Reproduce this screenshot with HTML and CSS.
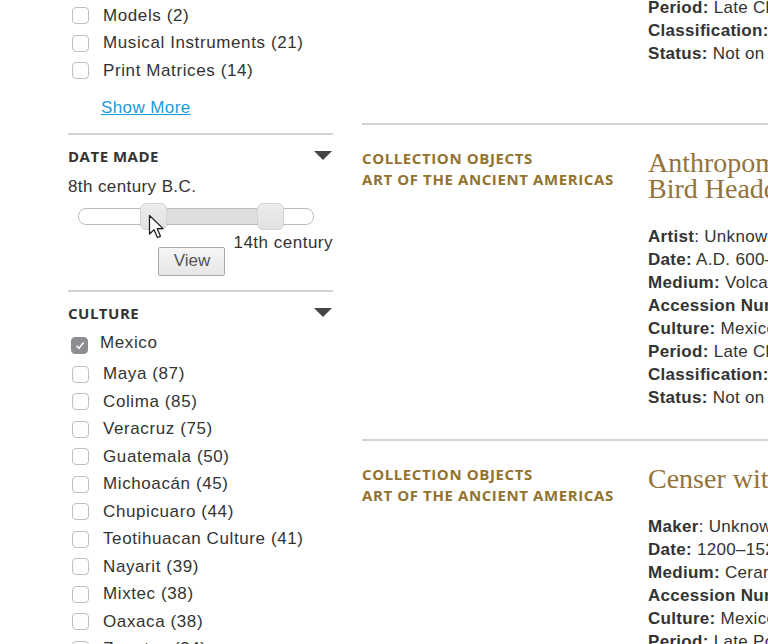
FILE: index.html
```html
<!DOCTYPE html>
<html lang="en">
<head>
    <meta charset="UTF-8">
    <meta name="viewport" content="width=device-width, initial-scale=1.0">
    <title>Collection Search</title>
    <link rel="stylesheet" href="styles.css">
</head>
<body>
<div class="page">

    <aside class="sidebar">
        <ul class="facet-list">
            <li><span class="box"></span>Models (2)</li>
            <li><span class="box"></span>Musical Instruments (21)</li>
            <li><span class="box"></span>Print Matrices (14)</li>
        </ul>
        <a class="show-more" href="#">Show More</a>

        <section class="facet">
            <h3 class="facet-title">Date Made <span class="caret"></span></h3>
            <div class="range-min">8th century B.C.</div>
            <div class="slider">
                <div class="slider-fill"></div>
                <span class="handle handle-lo"></span>
                <span class="handle handle-hi"></span>
                <svg class="cursor" width="18" height="27" viewBox="0 0 18 27">
                    <path d="M1.5 1.5 L1.5 20 L6 15.8 L9.5 23.5 L12.5 22.2 L9.2 14.6 L15 14.6 Z" fill="#fff" stroke="#222" stroke-width="1.3" stroke-linejoin="round"/>
                </svg>
            </div>
            <div class="range-row">
                <button class="view-btn">View</button>
                <span class="range-max">14th century</span>
            </div>
        </section>

        <section class="facet">
            <h3 class="facet-title">Culture <span class="caret"></span></h3>
            <ul class="facet-list">
                <li class="checked"><span class="box box-on">
                    <svg width="10" height="9" viewBox="0 0 10 9"><path d="M1.5 4.8 L4 7.3 L8.6 1.4" fill="none" stroke="#fff" stroke-width="1.5"/></svg>
                </span>Mexico</li>
                <li><span class="box"></span>Maya (87)</li>
                <li><span class="box"></span>Colima (85)</li>
                <li><span class="box"></span>Veracruz (75)</li>
                <li><span class="box"></span>Guatemala (50)</li>
                <li><span class="box"></span>Michoacán (45)</li>
                <li><span class="box"></span>Chupicuaro (44)</li>
                <li><span class="box"></span>Teotihuacan Culture (41)</li>
                <li><span class="box"></span>Nayarit (39)</li>
                <li><span class="box"></span>Mixtec (38)</li>
                <li><span class="box"></span>Oaxaca (38)</li>
                <li><span class="box"></span>Zapotec (34)</li>
            </ul>
        </section>
    </aside>

    <main class="results">
        <div class="result result-tail">
            <div></div>
            <div class="details">
                <div><b>Period:</b> Late Classic</div>
                <div><b>Classification:</b> Sculpture</div>
                <div><b>Status:</b> Not on view</div>
            </div>
        </div>

        <div class="result">
            <div class="kind">Collection Objects<br>Art of the Ancient Americas</div>
            <div>
                <h2 class="result-title">Anthropomorphic Figure with<br>Bird Headdress</h2>
                <div class="details">
                    <div><b>Artist</b>: Unknown</div>
                    <div><b>Date:</b> A.D. 600–900</div>
                    <div><b>Medium:</b> Volcanic stone</div>
                    <div><b>Accession Number:</b> 1973.88.2</div>
                    <div><b>Culture:</b> Mexico, Huastec</div>
                    <div><b>Period:</b> Late Classic</div>
                    <div><b>Classification:</b> Sculpture</div>
                    <div><b>Status:</b> Not on view</div>
                </div>
            </div>
        </div>

        <div class="result">
            <div class="kind">Collection Objects<br>Art of the Ancient Americas</div>
            <div>
                <h2 class="result-title">Censer with Handle</h2>
                <div class="details">
                    <div><b>Maker</b>: Unknown</div>
                    <div><b>Date:</b> 1200–1521</div>
                    <div><b>Medium:</b> Ceramic</div>
                    <div><b>Accession Number:</b> 1958.31.4</div>
                    <div><b>Culture:</b> Mexico, Aztec</div>
                    <div><b>Period:</b> Late Postclassic</div>
                </div>
            </div>
        </div>
    </main>

</div>
</body>
</html>
```

FILE: styles.css
```css
body {
    margin: 0;
    padding: 0;
    background-color: #ffffff;
    color: #333333;
    font-family: 'Liberation Sans', Arial, sans-serif;
    overflow: hidden;
    height: 644px;
}

.page {
    display: flex;
    gap: 29px;
    padding-left: 68px;
}

/* sidebar */

.sidebar {
    width: 265px;
    flex: none;
    padding-top: 2px;
}

.facet-list {
    list-style: none;
    margin: 0;
    padding: 0;
}

.facet-list li {
    display: flex;
    align-items: center;
    height: 27.5px;
    font-size: 17px;
    letter-spacing: 0.6px;
    color: #333;
}

.box {
    width: 15px;
    height: 15px;
    border: 1px solid #bfbfbf;
    border-radius: 4px;
    background-color: #fff;
    margin-left: 4px;
    margin-right: 14px;
    flex: none;
    display: flex;
    align-items: center;
    justify-content: center;
}

.box-on {
    background-color: #8d8d91;
    border-color: #8d8d91;
    margin-left: 3px;
    margin-right: 12px;
    position: relative;
    top: 2px;
}

.facet-list li.checked {
    margin-top: 7px;
    margin-bottom: 3.5px;
}

.show-more {
    display: block;
    margin: 9.5px 0 11px 33px;
    line-height: 27.5px;
    font-size: 17px;
    letter-spacing: 0.4px;
    color: #1a9bd8;
    text-decoration: underline;
}

.facet {
    border-top: 2px solid #d3d3d3;
}

.facet-title {
    display: flex;
    justify-content: space-between;
    align-items: center;
    margin: 11px 0 0 0;
    height: 20px;
    font-family: 'Open Sans', sans-serif;
    font-weight: 700;
    font-size: 15px;
    letter-spacing: 0.5px;
    text-transform: uppercase;
    color: #333;
}

.caret {
    width: 0;
    height: 0;
    border-left: 9px solid transparent;
    border-right: 9px solid transparent;
    border-top: 9px solid #454545;
    margin-right: 1px;
}

.range-min {
    margin-top: 9px;
    line-height: 24px;
    font-size: 17px;
    letter-spacing: 0.4px;
}

.slider {
    position: relative;
    height: 15px;
    margin: 9px 19px 0 10px;
    border: 1px solid #bcbcbc;
    border-radius: 8px;
    background-color: #fff;
}

.slider-fill {
    position: absolute;
    top: 0;
    bottom: 0;
    left: 74px;
    width: 118px;
    background-color: #dedede;
}

.handle {
    position: absolute;
    top: -6px;
    width: 25px;
    height: 25px;
    border: 1px solid #d2d2d2;
    border-radius: 6px;
    background: linear-gradient(#ececec, #e2e2e2);
}

.handle-lo {
    left: 61px;
}

.handle-hi {
    left: 178px;
}

.cursor {
    position: absolute;
    left: 69px;
    top: 5px;
}

.range-row {
    display: flex;
    justify-content: flex-end;
    align-items: flex-start;
    gap: 8px;
    margin-top: 8px;
    margin-bottom: 14px;
}

.range-max {
    line-height: 20px;
    font-size: 17px;
    letter-spacing: 0.5px;
}

.view-btn {
    margin-top: 14px;
    width: 67px;
    height: 29px;
    border: 1px solid #a9a9a9;
    border-radius: 2px;
    background: linear-gradient(#f6f6f6, #e6e6e6);
    font-family: 'Liberation Sans', Arial, sans-serif;
    font-size: 17px;
    color: #555;
    padding: 0;
}

/* results */

.results {
    flex: 1;
    min-width: 0;
    margin-top: -4.5px;
}

.result {
    display: grid;
    grid-template-columns: 286px 1fr;
    border-top: 2px solid #d3d3d3;
    padding-top: 23px;
    padding-bottom: 30px;
}

.result-tail {
    border-top: none;
    padding-top: 0;
    padding-bottom: 58px;
}

.kind {
    font-family: 'Open Sans', sans-serif;
    font-weight: 700;
    font-size: 15px;
    letter-spacing: 0.6px;
    line-height: 21px;
    text-transform: uppercase;
    color: #93722e;
    white-space: nowrap;
}

.result-title {
    margin: 2px 0 23px 0;
    font-family: 'Liberation Serif', 'Times New Roman', serif;
    font-weight: normal;
    font-size: 28px;
    line-height: 26px;
    color: #94733a;
    white-space: nowrap;
}

.details {
    font-size: 17px;
    line-height: 23px;
    letter-spacing: 0.3px;
    white-space: nowrap;
    color: #333;
}

.details b {
    font-weight: 700;
}
```
